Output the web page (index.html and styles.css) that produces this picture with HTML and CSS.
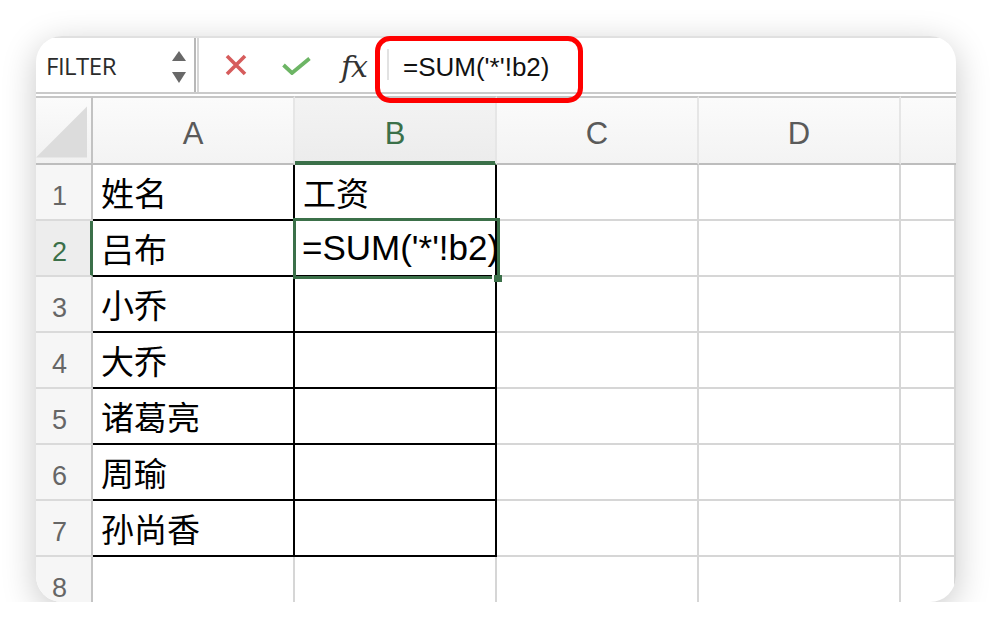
FILE: index.html
```html
<!DOCTYPE html>
<html lang="zh">
<head>
<meta charset="utf-8">
<title>Sheet</title>
<link rel="stylesheet" href="styles.css">
</head>
<body>
<div class="stage">
  <div class="card">
    <div class="toolbar">
      <div class="namebox">
        <span class="name">FILTER</span>
        <span class="spin">
          <svg class="arrow" width="14" height="10" viewBox="0 0 14 10"><polygon points="7,0 14,10 0,10"/></svg>
          <svg class="arrow" width="14" height="11" viewBox="0 0 14 11"><polygon points="0,0 14,0 7,11"/></svg>
        </span>
      </div>
      <div class="actions">
        <svg class="icon-x" width="22" height="22" viewBox="0 0 22 22"><path d="M2 2 L20 20 M20 2 L2 20"/></svg>
        <svg class="icon-ok" width="29" height="18" viewBox="0 0 29 18"><polyline points="1.5,8 10,16 27.5,1.5"/></svg>
        <span class="fx">fx</span>
      </div>
      <div class="formula">
        <span class="fsep"></span>
        <span class="ftext">=SUM('*'!b2)</span>
      </div>
    </div>
    <div class="sheet">
      <div class="corner"><svg width="52" height="52" viewBox="0 0 52 52"><polygon points="52,0 52,52 0,52"/></svg></div>
      <div class="hd">A</div>
      <div class="hd hd-sel">B</div>
      <div class="hd">C</div>
      <div class="hd">D</div>
      <div class="hd hd-last"></div>

      <div class="rh">1</div>
      <div class="c t">姓名</div>
      <div class="c t">工资</div>
      <div class="c"></div><div class="c"></div><div class="c"></div>

      <div class="rh rh-sel">2</div>
      <div class="c t">吕布</div>
      <div class="c t lat">=SUM('*'!b2)</div>
      <div class="c"></div><div class="c"></div><div class="c"></div>

      <div class="rh">3</div>
      <div class="c t">小乔</div>
      <div class="c t"></div>
      <div class="c"></div><div class="c"></div><div class="c"></div>

      <div class="rh">4</div>
      <div class="c t">大乔</div>
      <div class="c t"></div>
      <div class="c"></div><div class="c"></div><div class="c"></div>

      <div class="rh">5</div>
      <div class="c t">诸葛亮</div>
      <div class="c t"></div>
      <div class="c"></div><div class="c"></div><div class="c"></div>

      <div class="rh">6</div>
      <div class="c t">周瑜</div>
      <div class="c t"></div>
      <div class="c"></div><div class="c"></div><div class="c"></div>

      <div class="rh">7</div>
      <div class="c t">孙尚香</div>
      <div class="c t"></div>
      <div class="c"></div><div class="c"></div><div class="c"></div>

      <div class="rh">8</div>
      <div class="c"></div><div class="c"></div>
      <div class="c"></div><div class="c"></div><div class="c"></div>

      <div class="selection"></div>
      <div class="handle"></div>
    </div>
  </div>
  <div class="highlight"></div>
</div>
</body>
</html>
```

FILE: styles.css
```css
html, body {
  margin: 0;
  padding: 0;
  background: #ffffff;
}

.stage {
  position: relative;
  margin: 36px 0 0 36px;
  width: 920px;
  height: 566px;
}

.card {
  width: 100%;
  height: 100%;
  background: #ffffff;
  border-radius: 26px;
  overflow: hidden;
  box-shadow: 0 8px 34px rgba(0, 0, 0, 0.22);
}

/* ---------- toolbar ---------- */
.toolbar {
  height: 58px;
  box-sizing: border-box;
  border-top: 2px solid #e0e0e0;
  border-bottom: 2px solid #cacaca;
  display: flex;
  align-items: stretch;
  font-family: "Liberation Sans", Arial, sans-serif;
}

.namebox {
  width: 160px;
  box-sizing: border-box;
  border-right: 2px solid #b8b8b8;
  display: flex;
  align-items: center;
  padding-left: 10px;
}

.name {
  font-family: "Open Sans", "Liberation Sans", sans-serif;
  font-size: 24px;
  letter-spacing: -0.5px;
  color: #2b2b2b;
}

.spin {
  margin-left: auto;
  margin-right: 8px;
  margin-top: 3px;
  display: flex;
  flex-direction: column;
  gap: 11px;
}

.arrow {
  display: block;
  fill: #686868;
}

.actions {
  width: 183px;
  margin-left: 1px;
  box-sizing: border-box;
  border-left: 2px solid #d6d6d6;
  display: flex;
  align-items: center;
  padding-left: 26px;
}

.icon-x {
  display: block;
  fill: none;
  stroke: #d65c5c;
  stroke-width: 3.6;
}

.icon-ok {
  display: block;
  margin-left: 35px;
  margin-top: 2px;
  fill: none;
  stroke: #6db565;
  stroke-width: 3.8;
}

.fx {
  margin-left: 30px;
  margin-top: 3px;
  font-family: "DejaVu Serif", "Liberation Serif", serif;
  font-style: italic;
  font-size: 30px;
  letter-spacing: -1px;
  color: #333333;
}

.formula {
  flex: 1;
  display: flex;
  align-items: center;
  padding-left: 7px;
  padding-top: 4px;
}

.fsep {
  width: 2px;
  height: 31px;
  margin-top: -6px;
  background: #e2e2e2;
}

.ftext {
  margin-left: 14px;
  font-size: 26px;
  color: #111111;
}

.highlight {
  position: absolute;
  left: 339px;
  top: 0;
  width: 208px;
  height: 67px;
  box-sizing: border-box;
  border: 5px solid #ff0000;
  border-radius: 15px;
}

/* ---------- sheet ---------- */
.sheet {
  position: relative;
  margin-top: 2px;
  display: grid;
  grid-template-columns: 57px repeat(4, 202px) 1fr;
  grid-template-rows: 69px repeat(8, 56px);
}

.corner {
  box-sizing: border-box;
  border-top: 2px solid #c6c6c6;
  border-bottom: 2px solid #bdbdbd;
  border-right: 2px solid #c2c2c2;
  background: linear-gradient(#fbfbfb, #f1f1f1);
  display: flex;
  justify-content: flex-end;
  align-items: flex-end;
  padding: 0 4px 5px 0;
}

.corner svg {
  display: block;
  fill: #dcdcdc;
}

.hd {
  box-sizing: border-box;
  border-top: 2px solid #c6c6c6;
  border-bottom: 2px solid #bdbdbd;
  border-right: 2px solid #e6e6e6;
  background: linear-gradient(#fbfbfb, #f3f3f3);
  display: flex;
  justify-content: center;
  align-items: center;
  padding-top: 7px;
  font-family: "Liberation Sans", Arial, sans-serif;
  font-size: 31px;
  color: #5a5a5a;
}

.hd-sel {
  background: linear-gradient(#f3f3f3, #ececec);
  border-bottom-color: #3b7049;
  box-shadow: inset 0 -2px 0 #3b7049;
  color: #3b7049;
}

.hd-last {
  border-right: none;
}

.rh {
  box-sizing: border-box;
  border-right: 2px solid #c4c4c4;
  border-bottom: 2px solid #dadada;
  background: #f6f6f6;
  display: flex;
  justify-content: center;
  align-items: center;
  padding-right: 8px;
  padding-top: 9px;
  font-family: "Liberation Sans", Arial, sans-serif;
  font-size: 27px;
  color: #666666;
}

.rh-sel {
  background: #ededed;
  border-right-color: #3b7049;
  box-shadow: inset -1px 0 0 #3b7049;
  color: #3b7049;
}

.c {
  box-sizing: border-box;
  border-right: 2px solid #d6d6d6;
  border-bottom: 2px solid #d6d6d6;
  display: flex;
  align-items: center;
  padding-left: 8px;
  white-space: nowrap;
  font-family: "Liberation Sans", "Noto Sans CJK SC", sans-serif;
  font-size: 33px;
  color: #000000;
  min-width: 0;
}

.t {
  border-right-color: #000000;
  border-bottom-color: #000000;
}

.lat {
  font-size: 35px;
  padding-left: 7px;
}

.selection {
  position: absolute;
  left: 257px;
  top: 122px;
  width: 207px;
  height: 61px;
  box-sizing: border-box;
  border: 3px solid #3b7049;
  pointer-events: none;
}

.handle {
  position: absolute;
  left: 458px;
  top: 179px;
  width: 8px;
  height: 7px;
  background: #3b7049;
  box-shadow: -2px 0 0 #ffffff;
}
```
